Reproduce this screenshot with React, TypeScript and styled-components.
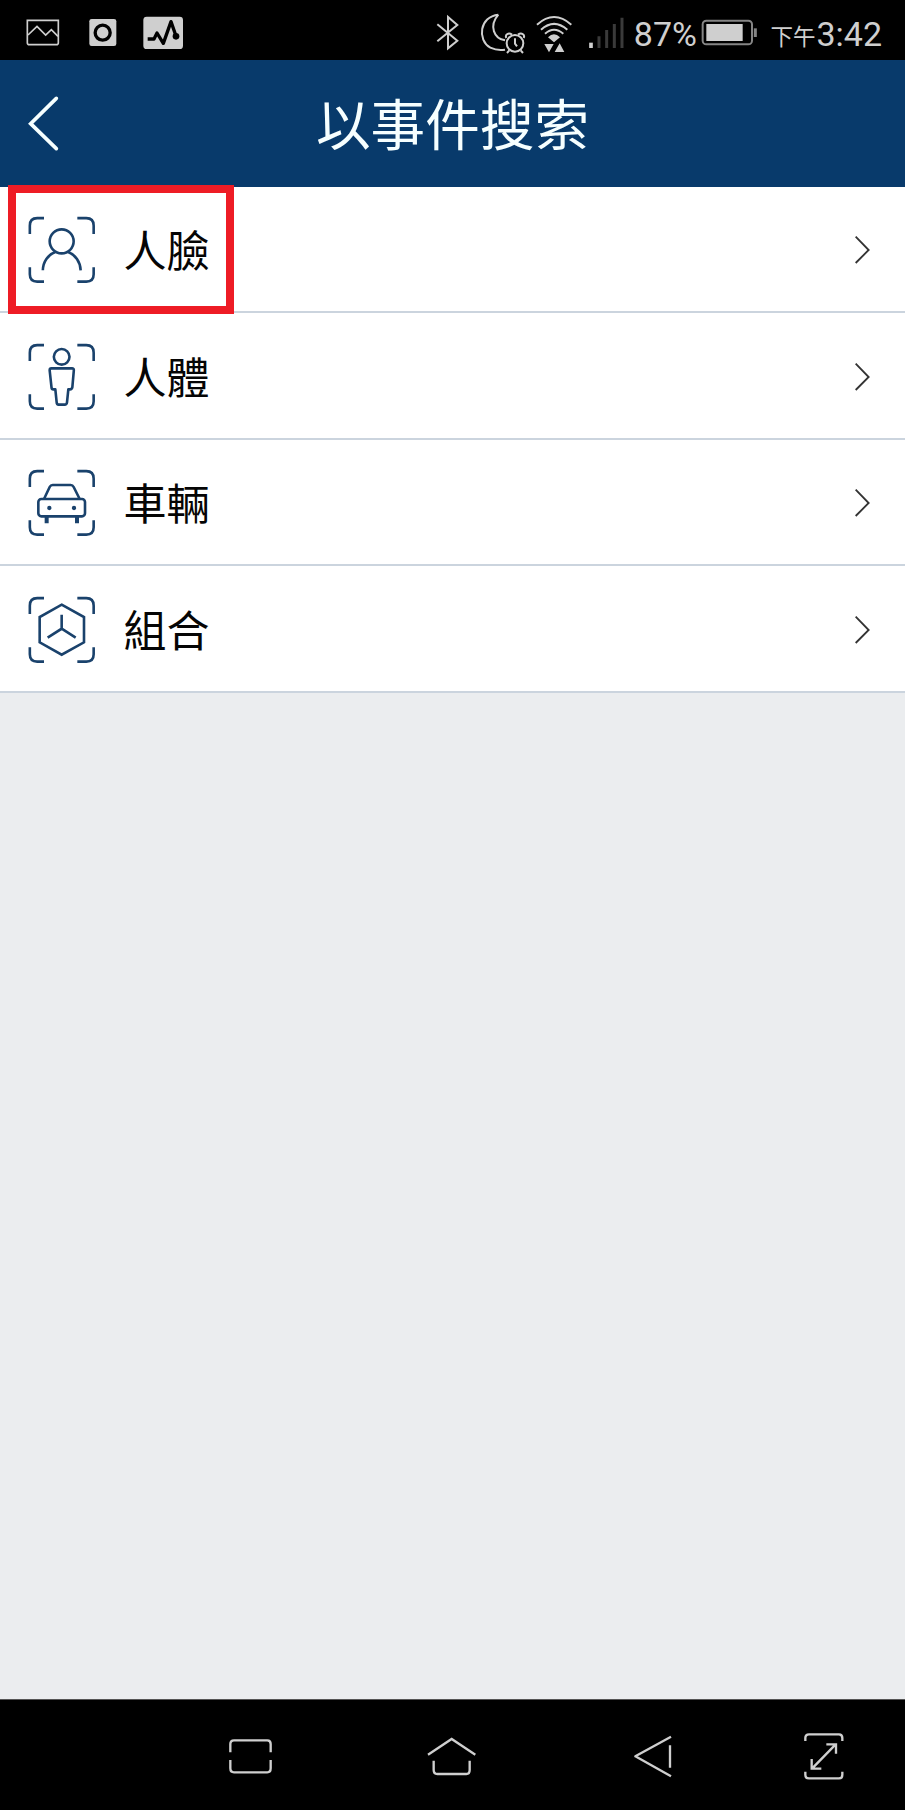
import React from 'react';
import styled, { createGlobalStyle } from 'styled-components';

const GlobalStyle = createGlobalStyle`
  * { box-sizing: border-box; }
  body { margin: 0; background: #ebedef; }
  svg { display: block; flex: none; }
`;

const cjk = '"Noto Sans CJK TC", sans-serif';

const Screen = styled.div`
  width: 905px;
  height: 1810px;
  display: flex;
  flex-direction: column;
  overflow: hidden;
  background: #ebedef;
  font-family: ${cjk};
`;

const StatusBar = styled.div`
  flex: none;
  height: 60px;
  background: #000;
  color: #cfcfcf;
  display: flex;
  justify-content: space-between;
  padding: 0 23px 0 26px;
`;

const StatusGroup = styled.div`
  display: flex;
  align-items: center;
`;

const StatusText = styled.span<{ $size: number; $left?: number; $right?: number; $top?: number }>`
  font-family: Roboto, ${cjk};
  font-size: ${(p) => p.$size}px;
  font-weight: 400;
  line-height: 40px;
  white-space: nowrap;
  margin-left: ${(p) => p.$left ?? 0}px;
  margin-right: ${(p) => p.$right ?? 0}px;
  padding-top: ${(p) => p.$top ?? 0}px;
`;

const Header = styled.header`
  flex: none;
  height: 127px;
  background: #083a6b;
  color: #f6ffff;
  display: grid;
  grid-template-columns: 88px 1fr 88px;
  align-items: center;
`;

const BackButton = styled.button`
  border: 0;
  padding: 0 0 0 27px;
  background: none;
  color: inherit;
`;

const Title = styled.h1`
  margin: 0;
  padding-bottom: 4px;
  font-size: 54.6px;
  line-height: 80px;
  font-weight: 400;
  text-align: center;
`;

const EventList = styled.ul`
  flex: none;
  margin: 0;
  padding: 0;
  list-style: none;
  display: grid;
  grid-template-rows: 126px 127px 126px 127px;
`;

const EventRow = styled.li`
  position: relative;
  display: flex;
  align-items: center;
  padding: 0 35px 0 28px;
  background: #fff;
  border-bottom: 2px solid #cbd4de;
  color: #1a426c;
`;

const EventName = styled.span`
  flex: 1;
  margin-left: 27.5px;
  padding-bottom: 2px;
  color: #050505;
  font-size: 43px;
  line-height: 64px;
`;

const Highlight = styled.div`
  position: absolute;
  left: 8px;
  top: -2px;
  width: 226px;
  height: 129px;
  border: 8px solid #ee1c25;
  z-index: 1;
`;

const Body = styled.main`
  flex: 1;
`;

const NavBar = styled.nav`
  flex: none;
  height: 111px;
  border-top: 1px solid #555;
  background: #000;
  color: #cfcfcf;
  display: flex;
  align-items: center;
  padding: 0 59px 0 227px;
`;

const NavGroup = styled.div<{ $gap: number; $end?: boolean }>`
  display: flex;
  gap: ${(p) => p.$gap}px;
  margin-left: ${(p) => (p.$end ? 'auto' : 0)};
`;

type GlyphProps = { x: number; w: number; y?: number; h?: number; sw?: number; children: React.ReactNode };

/* Line glyph drawn on a grid of three units per pixel. */
const Glyph = ({ x, w, y = 0, h = 180, sw = 6, children }: GlyphProps) => (
  <svg width={w / 3} height={h / 3} viewBox={`${x} ${y} ${w} ${h}`} fill="none" stroke="currentColor" strokeWidth={sw}>
    {children}
  </svg>
);

const ScanFrame = ({ children }: { children: React.ReactNode }) => (
  <Glyph x={0} w={204} h={204} sw={7.8}>
    <path d="M5.5 57V32Q5.5 9.500 27.5 9.500H48M148 9.500H175Q197 9.500 197 32V57M197 157V178Q197 200 175 200H148M48 200H27.5Q5.5 200 5.5 178V157" />
    {children}
  </Glyph>
);

const events = [
  {
    name: '人臉',
    art: (
      <>
        <circle cx="101" cy="79" r="36" />
        <path d="M44.5 166C45 140 60 119 82 111M158 166C157 140 142 119 120 111" />
      </>
    ),
  },
  {
    name: '人體',
    art: (
      <>
        <circle cx="101" cy="44.5" r="23.5" />
        <path strokeLinejoin="round" d="M70 79H132Q138 79 137.5 85L133 136Q132 142 126 142H121L117 181Q116 188 110 188H92Q86 188 86 181L82 142H76Q71 142 70.5 136L65 85Q65 79 70 79Z" />
      </>
    ),
  },
  {
    name: '車輛',
    art: (
      <>
        <path d="M48 93L65 57Q68 51 74 51H128Q134 51 137 57L155 93" />
        <rect x="31" y="93" width="140" height="52" rx="9" />
        <circle cx="64" cy="120" r="6.5" fill="currentColor" stroke="none" />
        <circle cx="138" cy="120" r="6.5" fill="currentColor" stroke="none" />
        <path strokeWidth="12" d="M56 147V166M147 147V166" />
      </>
    ),
  },
  {
    name: '組合',
    art: (
      <path d="M101 29L168 66V142L101 179L35 142V66ZM101 59V101L59 128M101 101L143 128" />
    ),
  },
];

export default function App() {
  return (
    <Screen>
      <GlobalStyle />
      <StatusBar>
        <StatusGroup>
          <Glyph x={78} w={190} sw={5}>
            <path d="M82 61H175V128Q175 134 169 134H88Q82 134 82 128Z" />
            <path d="M84 105L111 79L137 105L154 89L174 109" />
          </Glyph>
          <Glyph x={268} w={162}>
            <rect x="269" y="57" width="81" height="81" rx="7" fill="currentColor" stroke="none" />
            <circle cx="309" cy="98" r="22.5" stroke="#000" strokeWidth="10" />
          </Glyph>
          <Glyph x={430} w={123}>
            <rect x="431" y="50" width="119" height="97" rx="10" fill="currentColor" stroke="none" />
            <path d="M444 117H463L472 99L491 130L514 65L529 108" stroke="#000" strokeWidth="10" strokeLinejoin="round" />
            <circle cx="529" cy="109" r="10" fill="#000" stroke="none" />
          </Glyph>
        </StatusGroup>
        <StatusGroup>
          <Glyph x={45} w={80}>
            <path d="M52 73L112 122L84 145V51L112 75L52 124" />
          </Glyph>
          <Glyph x={123} w={205}>
            <path d="M235 44C178 50 171 120 211 143Q232 153 255 149M235 44C206 78 222 116 255 121" strokeLinejoin="round" />
            <circle cx="285" cy="130" r="25" />
            <path d="M285 115V131L291 139M268 151L261 159M302 151L309 159" />
            <path d="M259 114C254 103 266 97 276 104M311 114C316 103 304 97 294 104" />
          </Glyph>
          <Glyph x={328} w={142}>
            <path d="M349 74Q400 28 452 74M361 89Q400 54 440 89M373 101Q400 77 428 101" />
            <path d="M382 112Q400 94 418 112L400 127ZM371 132H399L385 157ZM402 156L417 130L431 156Z" fill="currentColor" stroke="none" />
          </Glyph>
          <Glyph x={470} w={170} sw={9}>
            <path d="M512 128V144" strokeWidth="11" />
            <path d="M536 109V144M559 90V144M582 72V144M605 53V144" stroke="#3a3a3a" />
          </Glyph>
          <StatusText $size={34} $right={3.5} $top={7}>87%</StatusText>
          <Glyph x={240} w={180}>
            <rect x="248" y="62" width="148" height="71" rx="11" stroke="#858585" />
            <rect x="259" y="72" width="109" height="51" fill="currentColor" stroke="none" />
            <path d="M406 85V111" stroke="#858585" strokeWidth="9" />
          </Glyph>
          <StatusText $size={22.5} $left={10} $top={13}>下午</StatusText>
          <StatusText $size={34} $left={1} $top={7}>3:42</StatusText>
        </StatusGroup>
      </StatusBar>
      <Header>
        <BackButton aria-label="返回">
          <Glyph x={81} w={100} y={285} h={171} sw={11}>
            <path d="M169 295L92 371L169 446" strokeLinecap="round" />
          </Glyph>
        </BackButton>
        <Title>以事件搜索</Title>
      </Header>
      <EventList>
        {events.map((event, i) => (
          <EventRow key={event.name}>
            <ScanFrame>{event.art}</ScanFrame>
            <EventName>{event.name}</EventName>
            <Glyph x={0} w={45} h={90} sw={5.5}>
              <path d="M2 8L41 48L2 87" stroke="#333" />
            </Glyph>
            {i === 0 && <Highlight />}
          </EventRow>
        ))}
      </EventList>
      <Body />
      <NavBar>
        <NavGroup $gap={151}>
          <Glyph x={81} w={144} y={30} h={330} sw={7}>
            <path d="M91 187V162Q91 151 102 151H202Q212 151 212 162V187M91 210V235Q91 247 102 247H202Q212 247 212 235V210" />
          </Glyph>
          <Glyph x={678} w={154} y={30} h={330} sw={7}>
            <path d="M684 194L755 147L826 194M701 212V240Q701 252 712 252H799Q809 252 809 240V212" />
          </Glyph>
        </NavGroup>
        <NavGroup $gap={128} $end>
          <Glyph x={84} w={120} y={30} h={330} sw={7}>
            <path d="M198 140L91 199L198 259M195 166V233" strokeLinejoin="round" />
          </Glyph>
          <Glyph x={588} w={135} y={30} h={330} sw={7}>
            <path d="M601 153V144Q601 133 612 133H702Q712 133 712 144V153M601 245V254Q601 265 612 265H702Q712 265 712 254V245M621 236L692 163M664 163H693V191M620 207V236H649" />
          </Glyph>
        </NavGroup>
      </NavBar>
    </Screen>
  );
}
